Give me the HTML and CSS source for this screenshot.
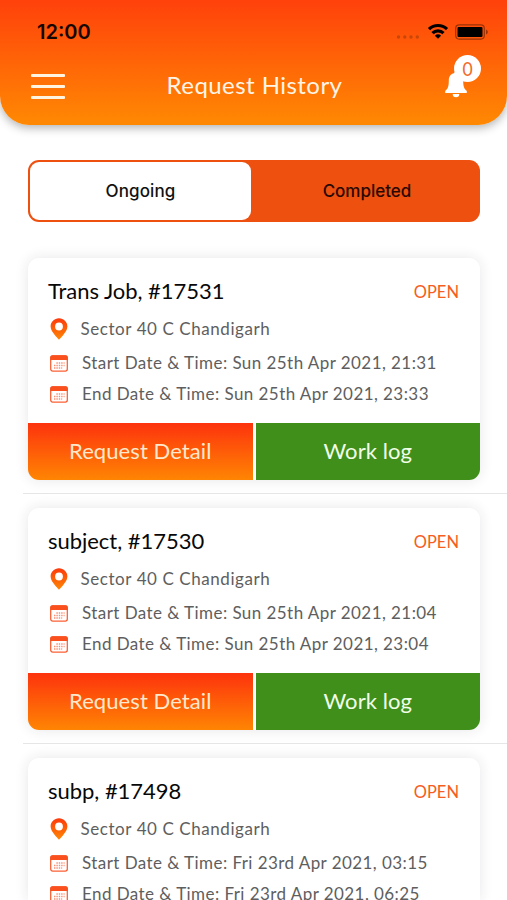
FILE: index.html
```html
<!DOCTYPE html>
<html lang="en">
<head>
<meta charset="utf-8">
<title>Request History</title>
<link rel="stylesheet" href="styles.css">
</head>
<body>
<svg class="defs" width="0" height="0" aria-hidden="true">
  <defs>
    <linearGradient id="flame" x1="0" y1="0" x2="0" y2="1"><stop offset="0" stop-color="#fc3a0c"/><stop offset="1" stop-color="#ff8704"/></linearGradient>
    <symbol id="pin" viewBox="0 0 18 22"><path fill="url(#flame)" fill-rule="evenodd" d="M9 .3C4.300.3.6 4 .6 8.500c0 3.400 2.400 6.200 4.500 8.900L9 21.800l3.900-4.400c2.100-2.700 4.500-5.500 4.500-8.900C17.400 4 13.700.3 9 .3zM9 4.600a3.900 3.900 0 1 1 0 7.800 3.900 3.900 0 0 1 0-7.800z"/></symbol>
    <symbol id="cal" viewBox="0 0 18 17"><rect x=".7" y=".9" width="16.600" height="15.200" rx="2" fill="#fff" stroke="#fb6034" stroke-width="1.300"/><path fill="#f9501e" d="M2.500.2h13A2.300 2.300 0 0 1 17.800 2.500V5H.2V2.500A2.300 2.300 0 0 1 2.500.2z"/><g stroke="#fb8f70" stroke-width="1.400" stroke-dasharray="1.400 1"><path d="M6.400 8h8.200M4 10.500h10.600M4 13h8.200"/></g></symbol>
  </defs>
</svg>
<header class="header">
  <div class="status">
    <span class="clock">12:00</span>
    <span class="indicators">
      <svg width="24" height="6" viewBox="0 0 24 6" fill="#c84608"><circle cx="2.500" cy="3" r="1.700"/><circle cx="8.800" cy="3" r="1.700"/><circle cx="15" cy="3" r="1.700"/><circle cx="21.300" cy="3" r="1.700"/></svg>
      <svg class="wifi" width="22" height="17" viewBox="0 0 22 17"><g fill="none" stroke="#000" stroke-width="3.200"><path d="M2 6.200a12.800 12.800 0 0 1 18 0"/><path d="M5.500 10.200a7.800 7.800 0 0 1 11 0"/></g><path d="M11 15.800l-3.100-3.100a4.700 4.700 0 0 1 6.200 0z"/></svg>
      <svg class="battery" width="34" height="16" viewBox="0 0 34 16"><rect x=".7" y=".9" width="28.600" height="14.200" rx="3.500" fill="none" stroke="#9c3206" stroke-width="1.200"/><rect x="2.500" y="2.900" width="25" height="10.200" rx="1"/><path fill="#9c3206" d="M31 5.500c2.400.8 2.400 4.200 0 5z"/></svg>
    </span>
  </div>
  <div class="nav">
    <span class="menu"><i></i><i></i><i></i></span>
    <h1>Request History</h1>
    <span class="alerts">
      <svg width="24" height="28" viewBox="0 0 24 28" fill="#fff"><path d="M12 1.500c1 0 1.700.7 1.700 1.600 3.800 1 5.500 3.900 5.500 7.300 0 5.700.8 8.200 3.600 10.500v2H1.200v-2c2.800-2.300 3.600-4.800 3.600-10.500 0-3.400 1.700-6.300 5.500-7.300 0-.9.700-1.600 1.700-1.600zM8.700 24h6.600a3.300 3.300 0 0 1-6.600 0z"/></svg>
      <span class="badge"><b>0</b></span>
    </span>
  </div>
</header>
<main>
  <div class="tabs"><span class="tab active">Ongoing</span><span class="tab">Completed</span></div>
  <section class="item">
    <article class="card">
      <div class="heading"><h2>Trans Job, #17531</h2><span class="state">OPEN</span></div>
      <p class="place"><svg width="18" height="22"><use href="#pin"/></svg><span>Sector 40 C Chandigarh</span></p>
      <p class="date"><svg width="18" height="17"><use href="#cal"/></svg><span>Start Date &amp; Time: Sun 25th Apr 2021, 21:31</span></p>
      <p class="date"><svg width="18" height="17"><use href="#cal"/></svg><span>End Date &amp; Time: Sun 25th Apr 2021, 23:33</span></p>
      <div class="actions"><span class="detail">Request Detail</span><span class="log">Work log</span></div>
    </article>
  </section>
  <section class="item">
    <article class="card">
      <div class="heading"><h2>subject, #17530</h2><span class="state">OPEN</span></div>
      <p class="place"><svg width="18" height="22"><use href="#pin"/></svg><span>Sector 40 C Chandigarh</span></p>
      <p class="date"><svg width="18" height="17"><use href="#cal"/></svg><span>Start Date &amp; Time: Sun 25th Apr 2021, 21:04</span></p>
      <p class="date"><svg width="18" height="17"><use href="#cal"/></svg><span>End Date &amp; Time: Sun 25th Apr 2021, 23:04</span></p>
      <div class="actions"><span class="detail">Request Detail</span><span class="log">Work log</span></div>
    </article>
  </section>
  <section class="item">
    <article class="card">
      <div class="heading"><h2>subp, #17498</h2><span class="state">OPEN</span></div>
      <p class="place"><svg width="18" height="22"><use href="#pin"/></svg><span>Sector 40 C Chandigarh</span></p>
      <p class="date"><svg width="18" height="17"><use href="#cal"/></svg><span>Start Date &amp; Time: Fri 23rd Apr 2021, 03:15</span></p>
      <p class="date"><svg width="18" height="17"><use href="#cal"/></svg><span>End Date &amp; Time: Fri 23rd Apr 2021, 06:25</span></p>
    </article>
  </section>
</main>
</body>
</html>
```
FILE: styles.css
```css
* { box-sizing: border-box; }
body { margin: 0; height: 900px; overflow: hidden; background: #fff; font-family: Lato, sans-serif; }
h1, h2, p { margin: 0; font-weight: 400; }
svg { display: block; flex: none; }
.defs { position: absolute; }
.header { height: 125px; border-radius: 0 0 29px 29px; background: linear-gradient(#ff410b, #ff8903); box-shadow: 0 3px 10px rgba(0, 0, 0, .3); }
.status { height: 63px; display: flex; justify-content: space-between; padding: 0 18px 0 37px; }
.clock { font: 600 20px/65px Inter, sans-serif; color: #160500; }
.indicators { display: flex; align-items: center; }
.indicators > svg:first-child { margin-top: 11px; }
.wifi { margin-left: 7px; }
.battery { margin-left: 6px; }
.nav { height: 46px; display: grid; grid-template-columns: 100px 1fr 100px; align-items: center; }
.menu { display: grid; gap: 8px; margin-left: 31px; width: 34px; }
.menu i { height: 3px; border-radius: 1px; background: #fff4df; }
h1 { padding-left: 2px; color: #fff5e5; font-size: 24px; line-height: 44px; height: 46px; letter-spacing: .45px; text-align: center; }
.alerts { position: relative; justify-self: end; margin: 0 39px 4px 0; }
.badge { position: absolute; left: 10px; top: -15px; width: 27px; height: 27px; border-radius: 50%; background: #fff; color: #f26a28; font: 400 20px/27px Lato, sans-serif; text-align: center; }
.badge b { display: block; font-weight: 400; transform: scaleX(.88); }
.tabs { width: 452px; height: 62px; margin: 35px 0 22px 28px; padding: 2px; display: grid; grid-template-columns: 221px 1fr; border-radius: 11px; background: #ee500f; }
.tab { padding-left: 5px; font: 500 17px/58px Inter, sans-serif; letter-spacing: 0; text-align: center; border-radius: 9px; color: #280800; }
.active { padding: 0; letter-spacing: .1px; background: #fff; color: #111; }
.item { height: 250px; margin-left: 23px; padding: 14px 27px 0 5px; border-bottom: 1px solid #e6e6e6; }
.item:last-child { height: 157px; border: 0; }
.item:last-child .card { height: 143px; border-radius: 11px 11px 0 0; }
.card { height: 222px; border-radius: 11px; background: #fff; box-shadow: 0 0 14px rgba(40, 40, 60, .11); display: flex; flex-direction: column; overflow: hidden; }
.heading { flex: none; height: 55px; padding: 5px 21px 0 20px; display: flex; justify-content: space-between; line-height: 58px; }
h2 { font-size: 22px; line-height: 55px; letter-spacing: -.03px; color: #080808; }
.state { font-size: 16.5px; color: #f65d21; }
.place, .date { flex: none; display: flex; align-items: center; padding-left: 22px; font-size: 17px; line-height: 31px; color: #5e5e5e; white-space: nowrap; }
.place { height: 31px; gap: 12.5px; letter-spacing: .57px; }
.date { height: 31px; gap: 14px; letter-spacing: .44px; }
.date span { margin-top: -3px; }
.place + .date { margin-top: 4px; }
.actions { margin-top: auto; height: 57px; display: grid; grid-template-columns: 1fr 1fr; gap: 3px; font-size: 22px; line-height: 56px; letter-spacing: .08px; text-align: center; }
.detail { background: linear-gradient(#fd330d, #ff8503); color: #ffe8cc; }
.log { background: #408f1b; color: #f1ffe8; }
```
